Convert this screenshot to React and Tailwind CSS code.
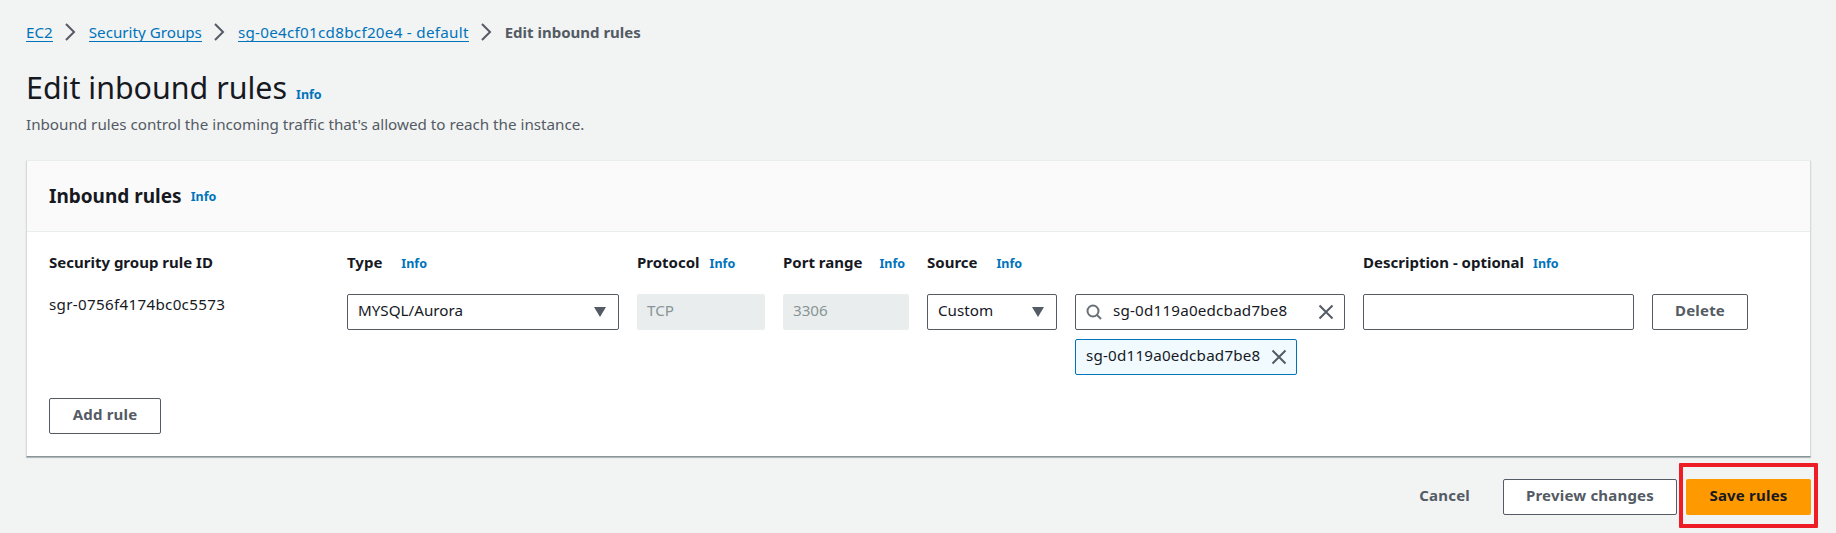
function Info({ className = '' }) {
  return <span className={`text-[12.5px] font-bold leading-none text-[#0073bb] ${className}`}>Info</span>
}

function Crumb({ children, className = '' }) {
  return (
    <>
      <a className={`border-b border-[#0073bb] text-[#0073bb] leading-[18px] ${className}`}>{children}</a>
      <svg viewBox="0 0 12 18" className="ml-[11px] mr-[13px] h-[18px] w-3 fill-none stroke-[#545b64] stroke-2">
        <path d="M2 1l8 8-8 8" />
      </svg>
    </>
  )
}

function Caret() {
  return (
    <svg viewBox="0 0 12 10" className="h-[10px] w-3 fill-[#545b64]">
      <path d="M0 0h12L6 10z" />
    </svg>
  )
}

function CloseIcon() {
  return (
    <svg viewBox="0 0 16 16" className="h-4 w-4 fill-none stroke-[#545b64] stroke-2">
      <path d="M1.5 1.5l13 13M14.5 1.5l-13 13" />
    </svg>
  )
}

function Button({ children, className = '' }) {
  return (
    <button className={`flex h-[36px] items-center justify-center rounded-[2px] border border-[#545b64] bg-white pb-[3px] text-[15px] font-bold tracking-[0.2px] text-[#545b64] ${className}`}>
      {children}
    </button>
  )
}

function ColHead({ children, info, className = '' }) {
  return (
    <div className={`flex h-[22px] items-baseline text-[15px] font-bold text-[#16191f] ${className}`}>
      {children}
      {info}
    </div>
  )
}

export default function App() {
  return (
    <div className="relative min-h-[533px] bg-[#f2f3f3] px-[26px] pt-[20px] text-[15.2px] text-[#16191f] [font-family:'Noto_Sans',sans-serif]">
      {/* Breadcrumb */}
      <div className="flex h-6 items-center">
        <Crumb>EC2</Crumb>
        <Crumb>Security Groups</Crumb>
        <Crumb className="tracking-[0.28px]">sg-0e4cf01cd8bcf20e4 - default</Crumb>
        <span className="text-[15px] font-bold text-[#545b64]">Edit inbound rules</span>
      </div>

      {/* Title */}
      <div className="mt-[24px] flex h-[40px] items-baseline">
        <h1 className="text-[30.4px] leading-[40px] font-normal">Edit inbound rules</h1>
        <Info className="ml-[9px]" />
      </div>
      <p className="mt-[6px] h-[20px] leading-[20px] text-[#545b64]">
        Inbound rules control the incoming traffic that's allowed to reach the instance.
      </p>

      {/* Card */}
      <div className="mt-[26px] mr-[-1px] h-[297px] rounded-[1px] border border-t-[#eaeded] border-r-[#d5dbdb] border-b-[#879596] border-l-[#d5dbdb] bg-white shadow-[0_1px_1px_rgba(0,28,36,0.3)]">
        <div className="flex h-[71px] items-center border-b border-[#eaeded] bg-[#fafafa] pl-[22px]">
          <h2 className="text-[19px] font-bold">Inbound rules</h2>
          <Info className="ml-[9px] mt-[3px]" />
        </div>

        <div className="flex gap-[18px] pl-[22px] pt-[19px]">
          <div className="w-[280px]">
            <ColHead>Security group rule ID</ColHead>
            <div className="mt-[21px] leading-[20px] tracking-[0.3px]">sgr-0756f4174bc0c5573</div>
          </div>

          <div className="w-[272px]">
            <ColHead info={<Info className="ml-[19px]" />}>Type</ColHead>
            <div className="mt-[21px] flex h-[36px] items-center justify-between rounded-[2px] border border-[#545b64] pb-[3px] pl-[10px] pr-[12px]">
              MYSQL/Aurora
              <span className="pt-[3px]"><Caret /></span>
            </div>
          </div>

          <div className="w-[128px]">
            <ColHead info={<Info className="ml-[10px]" />}>Protocol</ColHead>
            <div className="mt-[21px] flex h-[36px] items-center rounded-[2px] bg-[#eaeded] pb-[3px] pl-[10px] text-[#879596]">TCP</div>
          </div>

          <div className="w-[126px]">
            <ColHead info={<Info className="ml-[17px]" />}>Port range</ColHead>
            <div className="mt-[21px] flex h-[36px] items-center rounded-[2px] bg-[#eaeded] pb-[3px] pl-[10px] text-[#879596]">3306</div>
          </div>

          <div className="w-[130px]">
            <ColHead info={<Info className="ml-[19px]" />}>Source</ColHead>
            <div className="mt-[21px] flex h-[36px] items-center justify-between rounded-[2px] border border-[#545b64] pb-[3px] pl-[10px] pr-[12px]">
              Custom
              <span className="pt-[3px]"><Caret /></span>
            </div>
          </div>

          <div className="w-[270px] pt-[43px]">
            <div className="flex h-[36px] items-center rounded-[2px] border border-[#545b64] pl-[10px] pr-[10px]">
              <svg viewBox="0 0 16 16" className="h-4 w-4 fill-none stroke-[#687078] stroke-2">
                <circle cx="7" cy="7" r="5.5" />
                <path d="M11 11l4 4" />
              </svg>
              <span className="ml-[11px] flex-1 pb-[3px] tracking-[0.2px]">sg-0d119a0edcbad7be8</span>
              <CloseIcon />
            </div>
            <div className="mt-[9px] flex h-[36px] w-[222px] items-center justify-between rounded-[2px] border border-[#0073bb] bg-[#f1faff] pl-[10px] pr-[9px]">
              <span className="pb-[3px] tracking-[0.2px]">sg-0d119a0edcbad7be8</span>
              <CloseIcon />
            </div>
          </div>

          <div className="w-[271px]">
            <ColHead info={<Info className="ml-[9px]" />}>Description - optional</ColHead>
            <div className="mt-[21px] h-[36px] rounded-[2px] border border-[#545b64]" />
          </div>

          <div className="w-[96px] pt-[43px]">
            <Button className="w-full">Delete</Button>
          </div>
        </div>

        <div className="pl-[22px] pt-[23px]">
          <Button className="w-[112px]">Add rule</Button>
        </div>
      </div>

      {/* Footer */}
      <div className="mt-[22px] mr-[-1px] flex items-center justify-end">
        <span className="mr-[33px] pb-[3px] text-[15px] font-bold tracking-[0.2px] text-[#545b64]">Cancel</span>
        <Button className="w-[174px]">Preview changes</Button>
        <button className="ml-[9px] flex h-[36px] w-[125px] items-center justify-center rounded-[2px] bg-[#ff9900] pb-[3px] text-[15px] font-bold tracking-[0.2px] text-[#16191f]">
          Save rules
        </button>
      </div>

      {/* Red annotation box */}
      <div className="absolute left-[1679px] top-[463px] h-[65px] w-[139px] rounded-[1px] border-[4px] border-[#ee1c25]" />
    </div>
  )
}
